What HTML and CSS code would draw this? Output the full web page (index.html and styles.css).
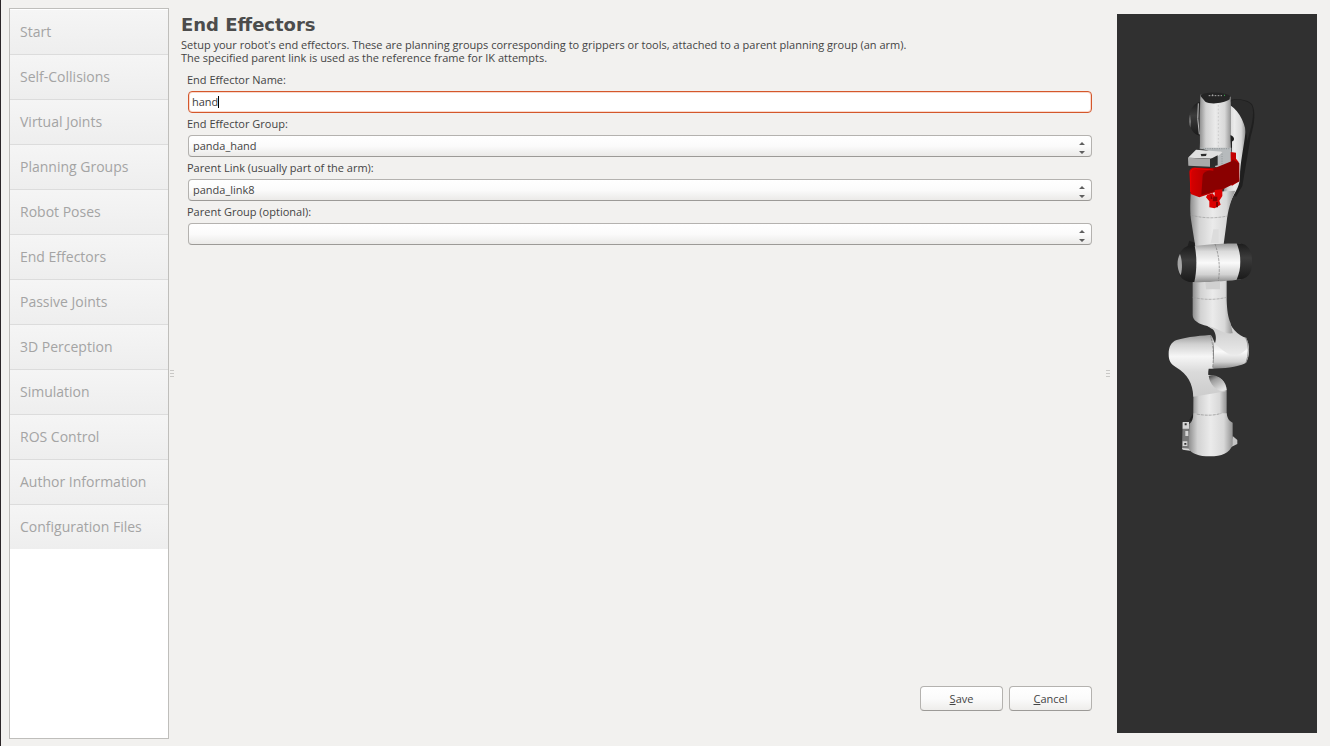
FILE: index.html
```html
<!DOCTYPE html>
<html lang="en">
<head>
    <meta charset="UTF-8">
    <meta name="viewport" content="width=device-width, initial-scale=1.0">
    <title>End Effectors</title>
    <link rel="stylesheet" href="styles.css">
</head>
<body>
    <nav class="sidebar">
        <button type="button" disabled>Start</button>
        <button type="button" disabled>Self-Collisions</button>
        <button type="button" disabled>Virtual Joints</button>
        <button type="button" disabled>Planning Groups</button>
        <button type="button" disabled>Robot Poses</button>
        <button type="button" disabled>End Effectors</button>
        <button type="button" disabled>Passive Joints</button>
        <button type="button" disabled>3D Perception</button>
        <button type="button" disabled>Simulation</button>
        <button type="button" disabled>ROS Control</button>
        <button type="button" disabled>Author Information</button>
        <button type="button" disabled>Configuration Files</button>
    </nav>

    <div class="splitter"><i></i><i></i><i></i></div>

    <main>
        <h1>End Effectors</h1>
        <p>Setup your robot's end effectors. These are planning groups corresponding to grippers or tools, attached to a parent planning group (an arm).<br>
        The specified parent link is used as the reference frame for IK attempts.</p>

        <form>
            <label for="name">End Effector Name:</label>
            <div class="field">
                <input type="text" id="name" value="hand">
                <span class="caret"></span>
            </div>

            <label for="group">End Effector Group:</label>
            <div class="field">
                <select id="group">
                    <option>panda_hand</option>
                </select>
                <svg class="arrows" viewBox="0 0 6 12"><path d="M0 3 3 0 6 3ZM0 9 3 12 6 9Z"/></svg>
            </div>

            <label for="parentLink">Parent Link (usually part of the arm):</label>
            <div class="field">
                <select id="parentLink">
                    <option>panda_link8</option>
                </select>
                <svg class="arrows" viewBox="0 0 6 12"><path d="M0 3 3 0 6 3ZM0 9 3 12 6 9Z"/></svg>
            </div>

            <label for="parentGroup">Parent Group (optional):</label>
            <div class="field">
                <select id="parentGroup">
                    <option></option>
                </select>
                <svg class="arrows" viewBox="0 0 6 12"><path d="M0 3 3 0 6 3ZM0 9 3 12 6 9Z"/></svg>
            </div>

            <div class="actions">
                <button type="button"><u>S</u>ave</button>
                <button type="button"><u>C</u>ancel</button>
            </div>
        </form>
    </main>

    <div class="splitter"><i></i><i></i><i></i></div>

    <aside class="viewport">
        <svg class="robot" viewBox="0 0 330 1170" role="img" aria-label="Robot arm">
            <defs>
                <linearGradient id="tube">
                    <stop offset="0" stop-color="#8e8e8e"/>
                    <stop offset="0.2" stop-color="#d2d2d2"/>
                    <stop offset="0.5" stop-color="#ebebeb"/>
                    <stop offset="0.8" stop-color="#d8d8d8"/>
                    <stop offset="1" stop-color="#929292"/>
                </linearGradient>
                <linearGradient id="barrel" x2="0" y2="1">
                    <stop offset="0" stop-color="#9a9a9a"/>
                    <stop offset="0.2" stop-color="#dadada"/>
                    <stop offset="0.5" stop-color="#fafafa"/>
                    <stop offset="0.8" stop-color="#d2d2d2"/>
                    <stop offset="1" stop-color="#8a8a8a"/>
                </linearGradient>
                <linearGradient id="elbow" x2="0" y2="1">
                    <stop offset="0" stop-color="#999999"/>
                    <stop offset="0.15" stop-color="#d0d0d0"/>
                    <stop offset="0.35" stop-color="#f6f6f6"/>
                    <stop offset="0.6" stop-color="#dadada"/>
                    <stop offset="1" stop-color="#cccccc"/>
                </linearGradient>
                <linearGradient id="cap" x2="0" y2="1">
                    <stop offset="0" stop-color="#1c1c1c"/>
                    <stop offset="0.4" stop-color="#3c3c3c"/>
                    <stop offset="1" stop-color="#1a1a1a"/>
                </linearGradient>
                <linearGradient id="red">
                    <stop offset="0" stop-color="#d90000"/>
                    <stop offset="0.4" stop-color="#b00000"/>
                    <stop offset="1" stop-color="#8a0000"/>
                </linearGradient>
                <linearGradient id="dome" x2="0.6" y2="1">
                    <stop offset="0" stop-color="#3c3c3c"/>
                    <stop offset="0.35" stop-color="#9c9c9c"/>
                    <stop offset="1" stop-color="#e4e4e4"/>
                </linearGradient>
                <linearGradient id="crease" x2="0" y2="1">
                    <stop offset="0" stop-color="#c4c4c4"/>
                    <stop offset="0.5" stop-color="#d4d4d4"/>
                    <stop offset="1" stop-color="#ececec"/>
                </linearGradient>
            </defs>

            <!-- forearm behind the wrist -->
            <path fill="#1f1f1f" d="M200 62C225 54 262 56 276 72 288 94 284 130 272 170L247 318 228 350 210 340Z"/>
            <path fill="url(#tube)" d="M211 66C238 80 262 122 256 160 252 200 240 250 240 290 240 325 218 342 208 375L190 340 216 212V184C224 184 226 170 211 165Z"/>
            <path fill="#2b2b2b" d="M211 62C236 55 268 62 276 78 284 100 276 136 262 184 258 132 240 96 211 76Z"/>

            <!-- upper arm -->
            <path fill="url(#tube)" d="M92 340C90 380 90 400 94 425L106 500H190L200 425C204 390 212 362 226 332Z"/>
            <path fill="none" stroke="#999999" stroke-width="2" stroke-dasharray="9 3" d="M92 405Q145 420 202 408"/>
            <path fill="#dcdcdc" d="M160 448H176V490H152Z"/>

            <!-- wrist -->
            <path fill="url(#cap)" d="M120 66C98 70 87 95 87 120 88 145 100 164 120 167Z"/>
            <path fill="#777777" d="M90 104C86 118 87 132 91 143L93 124Z"/>
            <path fill="none" stroke="#bbbbbb" stroke-width="3" d="M115 70Q110 115 118 163"/>
            <path fill="url(#tube)" d="M121 44 212 50V155C210 172 213 190 213 208H119C121 180 119 160 119 135Z"/>
            <path fill="#242424" d="M121 47C130 34 196 34 210 48L209 58C190 71 150 74 136 65Z"/>
            <path stroke="#aaaaaa" stroke-width="3" stroke-dasharray="5 4" fill="none" d="M146 47H186M158 43V51"/>
            <path fill="#339944" d="M192 44H195V48H192Z"/>
            <path stroke="#999999" stroke-width="1" stroke-dasharray="5 6" d="M175 75V200"/>
            <path fill="#b6babc" d="M119 203H214V250C202 266 178 266 165 260V220Z"/>
            <path stroke="#7f8587" stroke-width="2" stroke-dasharray="3 4" fill="none" d="M121 206H210M186 214V258"/>
            <path fill="#e0e0e0" d="M108 209 189 215 165 236 84 233Z"/>
            <path fill="#a9a9a9" d="M84 233 150 237V260L85 257Z"/>
            <path fill="#2c2c2c" d="M150 238 173 226V256L150 262ZM122 222 140 221 138 228 124 229Z"/>

            <!-- gripper -->
            <path fill="#c40000" d="M212 228V216L228 218V236L236 246 238 304 215 318Z"/>
            <path fill="url(#red)" d="M88 276C89 267 96 262 108 263L150 264 174 263 208 258 218 238 238 250 238 304 184 330 118 352 92 342Z"/>
            <path fill="#8a0000" d="M128 287C130 277 138 274 150 270L218 242 236 252V302L184 328 124 345Z"/>
            <path fill="none" stroke="#ee0000" stroke-width="3" d="M92 336V278Q94 266 108 266L160 270"/>
            <path fill="#db0000" d="M142 344 158 340 164 348 164 330 187 328V348L178 362 182 374 164 385 148 382V364L138 352Z"/>
            <path fill="#810000" d="M160 350H172V364H158ZM168 366H174V382H168ZM152 342 158 356 152 358Z"/>

            <!-- lower arm -->
            <path fill="url(#tube)" d="M96 880C102 905 100 950 100 1020H200V930C198 900 178 890 150 886Z"/>
            <path fill="url(#elbow)" d="M50 780C80 770 130 766 160 764V866L146 866C142 886 146 904 164 920 176 928 190 932 198 934L100 950C98 910 84 884 48 862 30 850 26 840 26 822 26 800 34 786 50 780Z"/>
            <path fill="url(#dome)" d="M146 888C168 878 198 900 200 930 180 942 150 920 146 888Z"/>
            <path fill="url(#barrel)" d="M156 764 256 772C272 790 270 835 256 850 230 862 190 866 157 866 163 830 163 800 156 764Z"/>

            <!-- shoulder tube running into the elbow -->
            <path fill="url(#crease)" d="M200 700C205 730 222 758 252 772L264 790C264 808 250 820 226 828 204 826 182 806 166 792 172 770 160 750 142 738Z"/>
            <path fill="url(#tube)" d="M98 600H200V660C201 690 204 712 212 730L218 760C190 764 172 742 142 738 116 732 98 722 98 705Z"/>
            <path fill="#d0d0d0" d="M136 606H180V628H138Z"/>
            <path fill="none" stroke="#999999" stroke-width="2" stroke-dasharray="9 3" d="M98 652Q150 664 200 652"/>
            <path fill="#303030" d="M152 764C158 770 160 780 165 790 170 776 168 758 158 748L146 742Z"/>
            <path fill="none" stroke="#777777" stroke-width="2" stroke-dasharray="8 3" d="M151 766Q164 805 158 864"/>
            <path fill="none" stroke="#8e8e8e" stroke-width="3" d="M258 773Q272 810 258 848"/>

            <!-- elbow barrel -->
            <path fill="#202020" d="M82 500 88 482 104 488V500Z"/>
            <path fill="url(#barrel)" d="M96 500C120 494 200 489 242 491V598C210 604 130 608 96 606Z"/>
            <path fill="url(#cap)" d="M104 497C66 492 52 525 52 553 52 584 66 610 103 606 111 570 111 530 104 497Z"/>
            <path fill="#a5a5a5" d="M60 522C49 540 51 568 62 586 68 566 67 542 60 522Z"/>
            <path fill="url(#cap)" d="M230 490C256 488 277 502 276 546 278 580 262 600 230 599 244 565 246 530 230 490Z"/>
            <path fill="none" stroke="#777777" stroke-width="2" stroke-dasharray="8 3" d="M165 492Q184 545 175 603"/>

            <!-- base -->
            <path fill="#1e1e1e" d="M88 1020 100 1000V1030Z"/>
            <path fill="#777777" d="M68 1028 86 1026 88 1108 66 1106Z"/>
            <path fill="#d5d5d5" d="M68 1026H87V1046H68ZM76 1053H85V1068H76ZM68 1084H82V1098H68ZM66 1104 90 1106V1112L68 1109Z"/>
            <path fill="#333333" d="M74 1030H80V1036H74ZM73 1089H79V1094H73Z"/>
            <path fill="#c5c5c5" d="M218 1068 232 1080V1092L212 1102Z"/>
            <path fill="url(#tube)" d="M100 1000H200C202 1016 208 1024 218 1028V1094C208 1120 185 1129 150 1129 116 1129 94 1120 86 1106L88 1032C96 1026 100 1016 100 1000Z"/>
            <path fill="none" stroke="#888888" stroke-width="2" stroke-dasharray="9 3" d="M110 1002Q150 1010 184 1000"/>
        </svg>
    </aside>
</body>
</html>
```
FILE: styles.css
```css
* {
    box-sizing: border-box;
}

body {
    display: flex;
    height: 100vh;
    margin: 0;
    border-left: 1px solid #2b2628;
    padding: 8px 13px 7px 8px;
    background-color: #f2f1ef;
    color: #444444;
    font-family: "Open Sans", "Noto Sans", sans-serif;
    font-size: 11px;
    line-height: 13px;
}

button, input, select {
    font: inherit;
    color: inherit;
}

.sidebar {
    width: 160px;
    flex: none;
    border: 1px solid #bfbebb;
    padding-top: 1px;
    background-color: white;
}

.sidebar button {
    display: block;
    width: 100%;
    height: 45px;
    border: none;
    border-bottom: 1px solid #dcdcdc;
    padding: 0 10px 2px;
    background: linear-gradient(#f5f5f5, #eeeeee);
    color: #a4a4a4;
    font-size: 14px;
    text-align: left;
}

.sidebar button:last-child {
    height: 44px;
    border-bottom: none;
}

.splitter {
    display: flex;
    flex-direction: column;
    justify-content: center;
    align-items: center;
    gap: 2px;
    width: 6px;
    flex: none;
}

.splitter i {
    width: 4px;
    height: 1px;
    background-color: #c9c8c6;
}

main {
    display: flex;
    flex-direction: column;
    flex: 1;
    padding: 6px 13px 28px 6px;
}

h1 {
    margin: 0 0 2px;
    color: #4c4c4c;
    font-family: "DejaVu Sans", sans-serif;
    font-size: 18px;
    line-height: 22px;
}

p {
    margin: 0;
}

form {
    display: flex;
    flex-direction: column;
    flex: 1;
    padding: 5px 0 0 6px;
}

label {
    height: 22px;
    line-height: 20px;
    padding-top: 1px;
}

.field {
    position: relative;
    height: 22px;
    padding-left: 1px;
}

.field input, .field select {
    display: block;
    width: 100%;
    height: 22px;
    margin: 0;
    border: 1px solid #b4b2af;
    border-bottom-color: #9c9a97;
    border-radius: 4px;
    padding: 0 4px 1px;
    outline: none;
}

.field select {
    appearance: none;
    background: linear-gradient(#ffffff, #fbfbfb 50%, #ebeae8);
}

.field input {
    border-color: #d4572b;
    padding: 0 3px 1px;
    background-color: white;
    box-shadow: inset 0 0 0 1px #f9d9cd;
    color: #3c3c3c;
}

.caret {
    position: absolute;
    top: 5px;
    left: 31px;
    width: 1px;
    height: 12px;
    background-color: black;
}

.arrows {
    position: absolute;
    top: 7px;
    right: 7px;
    width: 6px;
    height: 12px;
    fill: #5f5f5f;
    pointer-events: none;
}

.actions {
    display: flex;
    justify-content: flex-end;
    gap: 6px;
    margin-top: auto;
}

.actions button {
    width: 83px;
    height: 25px;
    border: 1px solid #b4b2af;
    border-bottom-color: #9c9a97;
    border-radius: 4px;
    padding: 0;
    background: linear-gradient(#ffffff, #fbfbfb 50%, #eeedeb);
}

.viewport {
    width: 200px;
    flex: none;
    margin: 6px 0 6px 6px;
    padding: 66px 47px 66px 43px;
    background-color: #303030;
}

.robot {
    display: block;
    width: 100%;
}
```
